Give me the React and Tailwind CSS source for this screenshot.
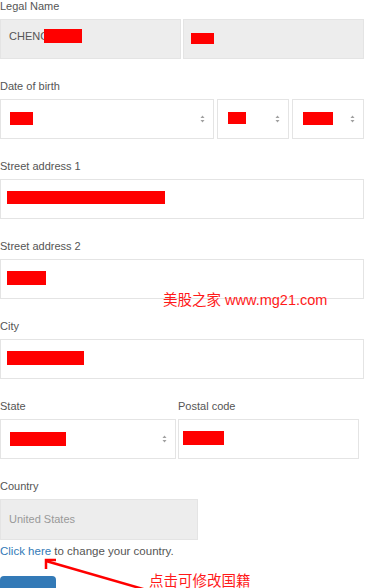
import React from "react";

const Red = ({ w, h, className = "" }) => (
  <div className={`bg-[#ff0000] shrink-0 ${className}`} style={{ width: w, height: h }} />
);

const Arrows = () => (
  <svg width="5" height="8" viewBox="0 0 5 8" className="shrink-0">
    <path d="M2.5 0.5 L4.5 3 L0.5 3 Z" fill="#a0a0a0" />
    <path d="M2.5 7.5 L4.5 5 L0.5 5 Z" fill="#a0a0a0" />
  </svg>
);

const Label = ({ children, className = "" }) => (
  <div className={`text-[11px] leading-[13px] text-[#555] h-[13px] mb-[6px] ${className}`}>{children}</div>
);

const Box = ({ children, className = "" }) => (
  <div className={`h-[40px] border border-[#e4e4e4] flex items-center ${className}`}>{children}</div>
);

export default function App() {
  return (
    <div
      className="relative w-[366px] h-[588px] overflow-hidden bg-white"
      style={{ fontFamily: '"Liberation Sans", Arial, "Noto Sans CJK SC", sans-serif' }}
    >
      <div className="w-[364px] flex flex-col">
        {/* Legal name */}
        <Label>Legal Name</Label>
        <div className="flex gap-[2px]">
          <Box className="w-[181px] bg-[#ededed] pl-[8px]">
            <div className="flex items-center mt-[-6px]">
              <span className="text-[11px] text-[#555]">CHENG</span>
              <Red w={38} h={14} className="ml-[-5px]" />
            </div>
          </Box>
          <Box className="w-[181px] bg-[#ededed] pl-[7px]">
            <Red w={23} h={11} className="mt-[-2px]" />
          </Box>
        </div>

        {/* DOB */}
        <Label className="mt-[21px]">Date of birth</Label>
        <div className="flex gap-[3px]">
          <Box className="w-[214px] pl-[9px] pr-[8px] justify-between">
            <Red w={23} h={13} className="mt-[-2px]" />
            <Arrows />
          </Box>
          <Box className="w-[72px] pl-[10px] pr-[8px] justify-between">
            <Red w={18} h={12} className="mt-[-3px]" />
            <Arrows />
          </Box>
          <Box className="w-[72px] pl-[10px] pr-[8px] justify-between">
            <Red w={30} h={13} className="mt-[-2px]" />
            <Arrows />
          </Box>
        </div>

        {/* Street 1 */}
        <Label className="mt-[21px]">Street address 1</Label>
        <Box className="w-[364px] pl-[6px]">
          <Red w={158} h={13} className="mt-[-3px]" />
        </Box>

        {/* Street 2 */}
        <Label className="mt-[21px]">Street address 2</Label>
        <Box className="w-[364px] pl-[6px]">
          <Red w={39} h={14} className="mt-[-2px]" />
        </Box>

        {/* City */}
        <Label className="mt-[21px]">City</Label>
        <Box className="w-[364px] pl-[6px]">
          <Red w={77} h={14} className="mt-[-3px]" />
        </Box>

        {/* State / Postal */}
        <div className="flex gap-[2px] mt-[21px]">
          <div className="w-[176px] flex flex-col">
            <Label>State</Label>
            <Box className="pl-[9px] pr-[8px] justify-between">
              <Red w={56} h={14} className="mt-[-1px]" />
              <Arrows />
            </Box>
          </div>
          <div className="w-[181px] flex flex-col">
            <Label>Postal code</Label>
            <Box className="pl-[4px]">
              <Red w={41} h={14} className="mt-[-2px]" />
            </Box>
          </div>
        </div>

        {/* Country */}
        <Label className="mt-[21px]">Country</Label>
        <Box className="w-[198px] h-[41px] bg-[#ededed] pl-[8px]">
          <span className="text-[11px] text-[#999]">United States</span>
        </Box>
        <div className="mt-[5px] text-[11.5px] leading-[13px] text-[#555]">
          <span className="text-[#337ab7]">Click here</span> to change your country.
        </div>

        <div className="mt-[18px] w-[56px] h-[34px] rounded-[4px] bg-[#337ab7] flex items-center justify-center text-white text-[12px]">
          Save
        </div>
      </div>

      {/* watermark */}
      <div
        className="absolute left-[163px] top-[291px] text-[14.5px] leading-[18px] text-[#ff1a1a] whitespace-nowrap"
        style={{ fontFamily: '"Liberation Sans", "Noto Sans CJK SC", sans-serif' }}
      >
        美股之家 www.mg21.com
      </div>

      {/* annotation */}
      <svg className="absolute left-0 top-0 pointer-events-none" width="366" height="588" viewBox="0 0 366 588">
        <path d="M46 561 L150 591" stroke="#ff0000" strokeWidth="2.5" fill="none" />
        <path d="M46 569 L46 560 L56 560" stroke="#ff0000" strokeWidth="2.5" fill="none" />
      </svg>
      <div
        className="absolute left-[149px] top-[570px] text-[14.5px] leading-[20px] text-[#ff1a1a] whitespace-nowrap"
        style={{ fontFamily: '"Noto Sans CJK SC", sans-serif' }}
      >
        点击可修改国籍
      </div>
    </div>
  );
}
